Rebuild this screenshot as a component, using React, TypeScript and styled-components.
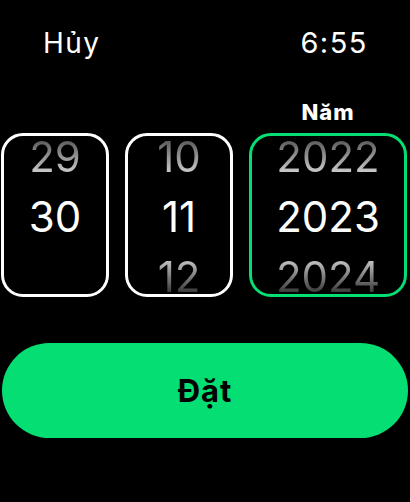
import React from 'react';
import styled, { createGlobalStyle, css } from 'styled-components';

const Global = createGlobalStyle`
  html, body { margin: 0; padding: 0; background: #000; }
  body { font-family: Inter, "Noto Sans", sans-serif; color: #fff; }
`;

const Screen = styled.div`
  width: 410px;
  height: 502px;
  box-sizing: border-box;
  padding-top: 23px;
  background: #000;
  display: flex;
  flex-direction: column;
  overflow: hidden;
`;

const Header = styled.div`
  display: flex;
  justify-content: space-between;
  align-items: center;
  height: 40px;
  padding: 0 42px 0 43px;
`;

const HeaderText = styled.span<{ $size?: number }>`
  font-size: ${(p) => p.$size ?? 28}px;
  line-height: 40px;
  font-weight: 400;
  letter-spacing: 1.5px;
  color: #fff;
`;

const Pickers = styled.div`
  display: grid;
  grid-template-columns: 108px 108px 158px;
  column-gap: 16px;
  margin: 37px 0 0 1px;
`;

const PickerColumn = styled.div`
  display: flex;
  flex-direction: column;
  align-items: stretch;
`;

const Label = styled.div`
  height: 24px;
  line-height: 24px;
  margin-bottom: 9px;
  text-align: center;
  font-size: 22px;
  font-weight: 800;
  letter-spacing: 1px;
  color: #fff;
`;

const Wheel = styled.div<{ $active?: boolean }>`
  height: 164px;
  box-sizing: border-box;
  border: 3px solid ${(p) => (p.$active ? '#04de72' : '#fff')};
  border-radius: 22px;
  overflow: hidden;
`;

const Track = styled.div`
  display: flex;
  flex-direction: column;
  align-items: center;
  margin-top: -9px;
`;

type Pos = 'prev' | 'current' | 'next';

const Item = styled.div<{ $pos: Pos }>`
  height: 60px;
  line-height: 60px;
  font-size: 42px;
  font-weight: 400;
  ${(p) =>
    p.$pos === 'current'
      ? css`
          color: #fff;
        `
      : css`
          color: transparent;
          background: ${p.$pos === 'prev'
            ? 'linear-gradient(180deg, #5a5a5a 22%, #cfcfcf 78%)'
            : 'linear-gradient(180deg, #c4c4c4 22%, #2e2e2e 80%)'};
          -webkit-background-clip: text;
          background-clip: text;
        `}
`;

const SetButton = styled.button`
  margin: 46px 2px 0;
  height: 95px;
  border: none;
  border-radius: 48px;
  background: #04de72;
  color: #000;
  font-family: Inter, "Noto Sans", sans-serif;
  font-size: 31px;
  font-weight: 700;
  letter-spacing: 1px;
  padding: 0;
`;

const columns: { label: string; values: [string, string, string]; active?: boolean }[] = [
  { label: '', values: ['29', '30', '\u00a0'] },
  { label: '', values: ['10', '11', '12'] },
  { label: 'Năm', values: ['2022', '2023', '2024'], active: true },
];

const positions: Pos[] = ['prev', 'current', 'next'];

export default function App() {
  return (
    <>
      <Global />
      <Screen>
        <Header>
          <HeaderText>Hủy</HeaderText>
          <HeaderText $size={29}>6:55</HeaderText>
        </Header>
        <Pickers>
          {columns.map((col, i) => (
            <PickerColumn key={i}>
              <Label>{col.label}</Label>
              <Wheel $active={col.active}>
                <Track>
                  {col.values.map((v, j) => (
                    <Item key={j} $pos={positions[j]}>
                      {v}
                    </Item>
                  ))}
                </Track>
              </Wheel>
            </PickerColumn>
          ))}
        </Pickers>
        <SetButton>Đặt</SetButton>
      </Screen>
    </>
  );
}
